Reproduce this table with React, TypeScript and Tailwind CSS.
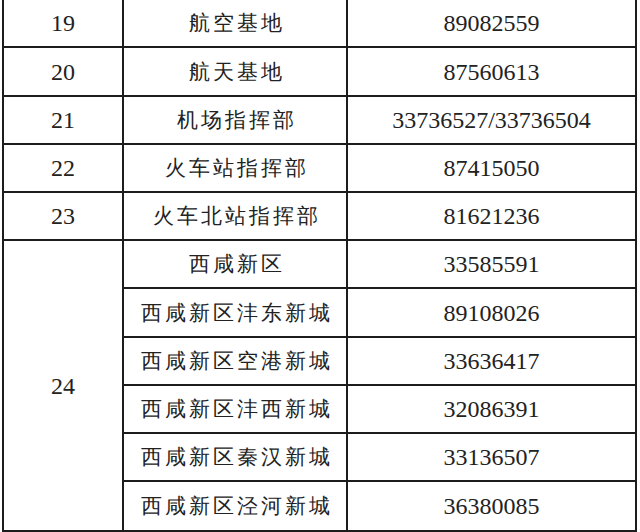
import React from "react";

interface Row {
  no: string;
  name: string;
  phone: string;
  h: string; // row height incl. bottom border
}

const topRows: Row[] = [
  { no: "19", name: "航空基地", phone: "89082559", h: "h-[48px]" },
  { no: "20", name: "航天基地", phone: "87560613", h: "h-[49px]" },
  { no: "21", name: "机场指挥部", phone: "33736527/33736504", h: "h-[48px]" },
  { no: "22", name: "火车站指挥部", phone: "87415050", h: "h-[48px]" },
  { no: "23", name: "火车北站指挥部", phone: "81621236", h: "h-[48px]" },
];

const xixianRows = [
  { name: "西咸新区", phone: "33585591", h: "h-[48px]" },
  { name: "西咸新区沣东新城", phone: "89108026", h: "h-[49px]" },
  { name: "西咸新区空港新城", phone: "33636417", h: "h-[48px]" },
  { name: "西咸新区沣西新城", phone: "32086391", h: "h-[48px]" },
  { name: "西咸新区秦汉新城", phone: "33136507", h: "h-[48px]" },
  { name: "西咸新区泾河新城", phone: "36380085", h: "h-[48px]" },
];

const cjk = "font-sans font-light text-[21px] tracking-[3px] pl-[3px]";
const num =
  "[--font-serif:Liberation_Serif,Times_New_Roman,Times,DejaVu_Serif,Georgia,serif] font-serif text-[24px]";

export default function App() {
  return (
    <div className="w-[640px] h-[532px] bg-white overflow-hidden text-[#222]">
      <div className="ml-[2px] w-[635px] border-l-2 border-r-2 border-[#1c1c1c]">
        {topRows.map((r) => (
          <div key={r.no} className={`flex border-b-2 border-[#1c1c1c] ${r.h}`}>
            <div className={`w-[120px] border-r-2 border-[#1c1c1c] flex items-center justify-center ${num}`}>
              {r.no}
            </div>
            <div className={`w-[224px] border-r-2 border-[#1c1c1c] flex items-center justify-center ${cjk}`}>
              {r.name}
            </div>
            <div className={`flex-1 flex items-center justify-center ${num}`}>{r.phone}</div>
          </div>
        ))}
        <div className="flex border-b-2 border-[#1c1c1c]">
          <div className={`w-[120px] border-r-2 border-[#1c1c1c] flex items-center justify-center ${num}`}>
            24
          </div>
          <div className="flex-1 flex flex-col">
            {xixianRows.map((r, i) => (
              <div
                key={r.name}
                className={`flex ${r.h} ${i < xixianRows.length - 1 ? "border-b-2 border-[#1c1c1c]" : "h-[46px]"}`}
              >
                <div className={`w-[224px] border-r-2 border-[#1c1c1c] flex items-center justify-center ${cjk}`}>
                  {r.name}
                </div>
                <div className={`flex-1 flex items-center justify-center ${num}`}>{r.phone}</div>
              </div>
            ))}
          </div>
        </div>
      </div>
      <div className="h-[1px] bg-[#c4dcbc]" />
    </div>
  );
}
